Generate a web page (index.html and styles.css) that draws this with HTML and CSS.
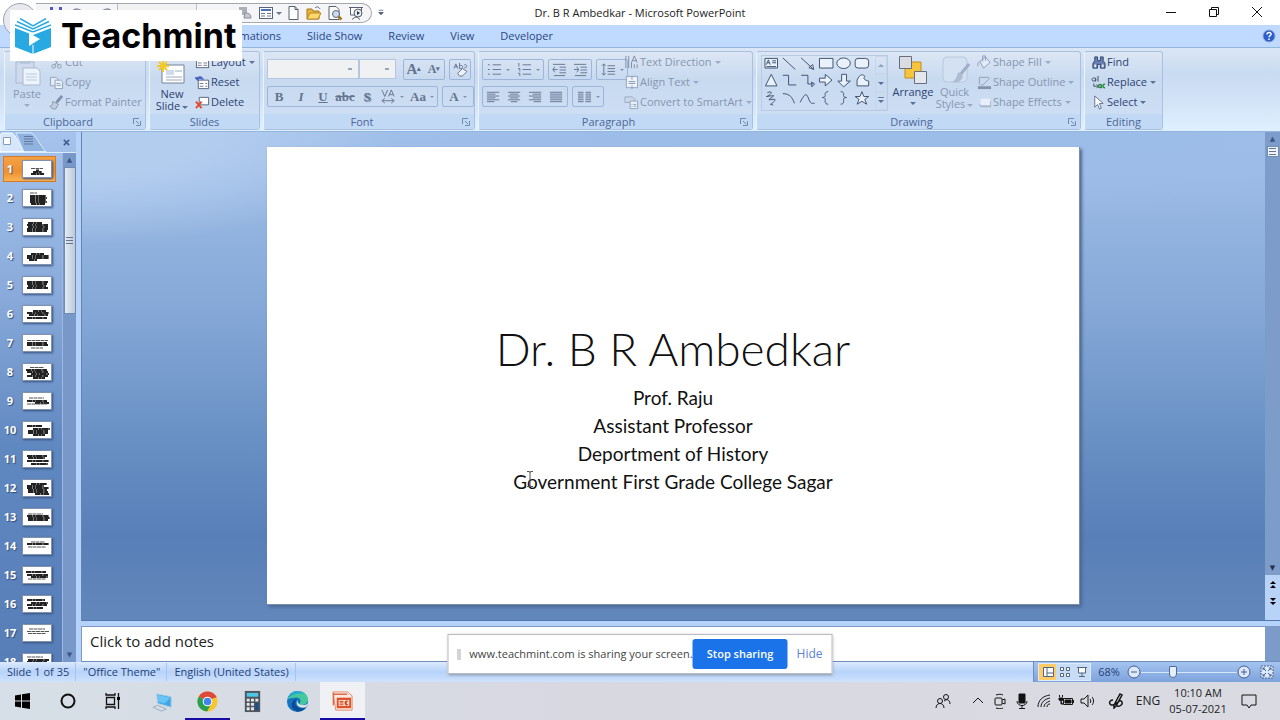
FILE: index.html
```html
<!DOCTYPE html>
<html lang="en">
<head>
<meta charset="utf-8">
<title>Dr. B R Ambedkar - Microsoft PowerPoint</title>
<link rel="stylesheet" href="styles.css">
</head>
<body>
<svg class="defs" aria-hidden="true">
  <symbol id="launch" viewBox="0 0 8 8"><path d="M.5 6V.5H6M3 3l3 3M7.500 3v4.500H3" fill="none" stroke="#7089ad"/></symbol>
  <symbol id="lines-l" viewBox="0 0 16 14"><path d="M1 2.500h13M1 4.500h9M1 6.500h13M1 8.500h9M1 10.500h13M1 12.500h8"/></symbol>
  <symbol id="lines-c" viewBox="0 0 16 14"><path d="M1 2.500h13M3 4.500h9M1 6.500h13M3 8.500h9M1 10.500h13M4 12.500h7"/></symbol>
  <symbol id="lines-r" viewBox="0 0 16 14"><path d="M1 2.500h13M5 4.500h9M1 6.500h13M5 8.500h9M1 10.500h13M6 12.500h8"/></symbol>
  <symbol id="lines-j" viewBox="0 0 16 14"><path d="M1 2.500h13M1 4.500h13M1 6.500h13M1 8.500h13M1 10.500h13M1 12.500h13"/></symbol>
  <symbol id="layout" viewBox="0 0 16 16"><rect x="1.500" y="2.500" width="13" height="11" fill="#fff" stroke="#56647c"/><path d="M3 5h10" stroke="#4870b8" stroke-width="2"/><path d="M3 8.500h4M3 11h4M9 8.500h4M9 11h4" stroke="#68768c"/></symbol>
</svg>
<div class="app">
  <header class="title-bar">
    <div class="quick">
      <svg class="office" viewBox="0 0 36 36" aria-hidden="true"><circle cx="18" cy="18" r="16.500" fill="#e7e9ee" stroke="#9ba3b0"/></svg>
      <svg class="quick-tools" viewBox="0 0 81 17" aria-hidden="true">
        <path d="M14 2h12v12H14z" fill="#5658b8"/><path d="M17 2h6v5h-6z" fill="#eef"/><path d="M36 8c2-5 9-5 11 1M76 8c-2-5-9-5-11 1" fill="none" stroke="#8c95a8" stroke-width="2"/>
      </svg>
      <span class="quick-field"></span>
      <button class="q" aria-label="Shape style"><svg viewBox="0 0 16 16"><path d="M2 2h8v8H2z" fill="#aab0b8"/><path d="M8 8c5 0 6 2 6 5H7z" fill="#c6cad0" stroke="#88909c"/></svg></button>
      <button class="q" aria-label="Slide layout"><svg viewBox="0 0 16 16"><use href="#layout"/></svg></button><i class="arrow"></i>
      <button class="q" aria-label="New"><svg viewBox="0 0 16 16"><path d="M4 1.500h6l3 3v10H4z" fill="#fff" stroke="#566070"/><path d="M10 1.500v3h3" fill="none" stroke="#566070"/></svg></button>
      <button class="q" aria-label="Open"><svg viewBox="0 0 16 16"><path d="M1 14V4h5l1 2h6v8z" fill="#e7b43a" stroke="#a9741c"/><path d="M1 14l3-6h11l-3 6z" fill="#ffd968" stroke="#b9862c"/><path d="M9 3c2-2 4-1 5 1" fill="none" stroke="#55647f"/></svg></button>
      <button class="q" aria-label="Print preview"><svg viewBox="0 0 16 16"><path d="M2 1.500h7l3 3v10H2z" fill="#fff" stroke="#566070"/><circle cx="9" cy="9" r="3.500" fill="#c9dcf0" stroke="#5b6674"/><path d="M11.500 11.500l3 3" stroke="#a8741f" stroke-width="2.500"/></svg></button>
      <button class="q" aria-label="Slide show"><svg viewBox="0 0 16 16"><path d="M1 2.500h14M2.500 3v7h11V3M8 10v3M4 14.500l4-3 4 3" fill="#fff" stroke="#566070"/><circle cx="10" cy="8" r="4" fill="#e5eaf1" stroke="#566070"/><path d="M9 6v4l3-2z" fill="#333"/></svg></button>
    </div>
    <button class="more" aria-label="Customize toolbar"><svg viewBox="0 0 8 8"><path d="M1 1h6M1 4h6L4 7z" stroke="#46566e" fill="#46566e"/></svg></button>
    <h1>Dr. B R Ambedkar - Microsoft PowerPoint</h1>
    <div class="window-buttons">
      <button aria-label="Minimize"><svg viewBox="0 0 12 12"><path d="M1 6.500h10"/></svg></button>
      <button aria-label="Restore"><svg viewBox="0 0 12 12"><path d="M1.500 3.500h7v7h-7zM3.500 3V1.500h7v7H9"/></svg></button>
      <button aria-label="Close"><svg viewBox="0 0 12 12"><path d="M1 1l10 10M11 1L1 11"/></svg></button>
    </div>
  </header>

  <nav class="tabs" aria-label="Ribbon tabs">
    <button>Animations</button><button>Slide Show</button><button>Review</button><button>View</button><button>Developer</button>
    <button class="help" aria-label="Help"><svg viewBox="0 0 14 14"><circle cx="7" cy="7" r="6" fill="#2c5fce" stroke="#8fa5cc"/><path d="M5 5.500c0-3 4.500-2.500 4 0C8.700 6.600 7 7 7 8.300M7 9.500v1.500" stroke="#fff" stroke-width="1.500" fill="none"/></svg></button>
  </nav>

  <section class="ribbon" aria-label="Ribbon">
    <section class="group clipboard off">
      <div class="body">
        <button class="big"><svg viewBox="0 0 30 30"><path d="M4 5h18v21H4z" fill="#cfdaec" stroke="#a9b9d2"/><path d="M8 2h10v5H8z" fill="#b9c7dc"/><path d="M11 11h14l3 3v14H11z" fill="#eef4fc" stroke="#a9b9d2"/><path d="M14 17h11M14 20h11M14 23h11" stroke="#bac9df"/></svg>Paste<i class="arrow"></i></button>
        <div class="rows">
          <button><svg viewBox="0 0 16 16"><path d="M4 2l6 9M12 2L6 11" stroke="#8f9cb0"/><circle cx="5" cy="12" r="2" fill="none" stroke="#8f9cb0"/><circle cx="11" cy="12" r="2" fill="none" stroke="#8f9cb0"/></svg>Cut</button>
          <button><svg viewBox="0 0 16 16"><path d="M1.500 2.500h6l2 2v7h-8z" fill="#e2ecf9" stroke="#91a1ba"/><path d="M6.500 5.500h6l2 2v7h-8z" fill="#eaf2fc" stroke="#91a1ba"/><path d="M8 9h4M8 11h5" stroke="#91a1ba"/></svg>Copy</button>
          <button><svg viewBox="0 0 16 16"><path d="M14 1L8 8" stroke="#8090aa" stroke-width="3"/><path d="M4 7l6 3-3 5c-3 0-5-1-6-3 2 0 3-2 3-5z" fill="#c3cede" stroke="#8796ad"/></svg>Format Painter</button>
        </div>
      </div>
      <h2>Clipboard</h2><button class="launch" aria-label="Clipboard options"><svg><use href="#launch"/></svg></button>
    </section>
    <section class="group slides">
      <div class="body">
        <button class="big"><svg viewBox="0 0 30 30"><path d="M5 8h22v18H5z" fill="#fff" stroke="#72829d"/><path d="M9 13h8v5H9z" fill="#d1dbeb"/><path d="M18 14h7M9 20h16M9 23h16" stroke="#9caabd"/><path d="M6 3v12M0 9h12M2 5l8 8M10 5l-8 8" stroke="#f1c928" stroke-width="2"/></svg>New<span>Slide<i class="arrow"></i></span></button>
        <div class="rows">
          <button><svg><use href="#layout"/></svg>Layout<i class="arrow"></i></button>
          <button><svg viewBox="0 0 16 16"><path d="M3.500 5.500h11v9h-11z" fill="#fff" stroke="#56647c"/><path d="M5 9h4M5 12h4M11 9h2M11 12h2" stroke="#68768c"/><path d="M9 5C8 1 4 1 3 4M0 3l3 3 2-4z" fill="#4868c8" stroke="#4868c8"/></svg>Reset</button>
          <button><svg viewBox="0 0 16 16"><path d="M4.500 2.500h10v8h-10z" fill="#fff" stroke="#56647c"/><path d="M1 7l6 7M7 7l-6 7" stroke="#e3492b" stroke-width="2"/></svg>Delete</button>
        </div>
      </div>
      <h2>Slides</h2>
    </section>
    <section class="group font off">
      <div class="body stack">
        <div class="line">
          <div class="combos"><select class="family" aria-label="Font"></select><select class="size" aria-label="Font size"></select></div>
          <div class="set"><button class="serif grow">A<sup>▴</sup></button><button class="serif shrink">A<sup>▾</sup></button></div>
          <div class="set"><button aria-label="Clear formatting"><svg viewBox="0 0 16 16"><path d="M1 7l2-5 2 5M2 5h3M7 7V1M7 4c4-2 5 4 0 3M12 3c4-1 3 4 0 3" fill="none"/><path d="M5 12l5-5 5 3-5 5H7z" fill="#edf3fc"/></svg></button></div>
        </div>
        <div class="line">
          <div class="set letters serif"><button><b>B</b></button><button><em>I</em></button><button><u>U</u></button><button><s>abc</s></button><button><b class="shadow">S</b></button><button class="spacing"><svg viewBox="0 0 16 16"><path d="M1 1l3 7 3-7M8 8l3-7 3 7M9 6h4M1 12.500h13M4 10l-3 2.500L4 15M11 10l3 2.500L11 15"/></svg><i class="arrow"></i></button><button class="case">Aa<i class="arrow"></i></button></div>
          <div class="set letters serif"><button class="case">A<i class="arrow"></i></button></div>
        </div>
      </div>
      <h2>Font</h2><button class="launch" aria-label="Font options"><svg><use href="#launch"/></svg></button>
    </section>
    <section class="group paragraph off">
      <div class="body">
        <div class="stack">
          <div class="line">
            <div class="set"><button class="wide" aria-label="Bullets"><svg viewBox="0 0 16 16"><path d="M1 3h2M1 8h2M1 13h2M6 3h9M6 8h9M6 13h9"/></svg><i class="arrow"></i></button><button class="wide" aria-label="Numbering"><svg viewBox="0 0 16 16"><path d="M2 1v4M1 7h2v3M1 12h2v3M6 3h9M6 8h9M6 13h9"/></svg><i class="arrow"></i></button></div>
            <div class="set"><button aria-label="Decrease indent"><svg viewBox="0 0 16 16"><path d="M1 2.500h13M8 5.500h7M8 8.500h7M8 11.500h7M2 14.500h12M6 8H1M3 5L1 8l2 3"/></svg></button><button aria-label="Increase indent"><svg viewBox="0 0 16 16"><path d="M1 2.500h13M8 5.500h7M8 8.500h7M8 11.500h7M2 14.500h12M1 8h5M4 5l2 3-2 3"/></svg></button></div>
            <div class="set"><button class="wide" aria-label="Line spacing"><svg viewBox="0 0 16 16"><path d="M3 2v12M1 4l2-2 2 2M1 12l2 2 2-2M7 4h8M7 7h8M7 10h8M7 13h8"/></svg><i class="arrow"></i></button></div>
          </div>
          <div class="line">
            <div class="set"><button aria-label="Align left"><svg><use href="#lines-l"/></svg></button><button aria-label="Center"><svg><use href="#lines-c"/></svg></button><button aria-label="Align right"><svg><use href="#lines-r"/></svg></button><button aria-label="Justify"><svg><use href="#lines-j"/></svg></button></div>
            <div class="set"><button class="wide" aria-label="Columns"><svg viewBox="0 0 16 14"><path d="M1 2.500h6M1 4.500h6M1 6.500h6M1 8.500h6M1 10.500h6M1 12.500h6M9 2.500h6M9 4.500h6M9 6.500h6M9 8.500h6M9 10.500h6M9 12.500h6"/></svg><i class="arrow"></i></button></div>
          </div>
        </div>
        <div class="rows">
          <button><svg viewBox="0 0 16 16"><path d="M2 1v13M5 1v13M8 8v6M11 10v4M14 10v4M8 8l3-7 3 7M9 6h4" fill="none" stroke="#7d8ba2"/></svg>Text Direction<i class="arrow"></i></button>
          <button><svg viewBox="0 0 16 16"><path d="M2.500 1.500h12v12h-12z" fill="#edf4fd" stroke="#91a1ba"/><path d="M5 7h7M5 9h7M8.500 1v4M8.500 15v-4" stroke="#8796ad"/></svg>Align Text<i class="arrow"></i></button>
          <button><svg viewBox="0 0 16 16"><path d="M1 2h8l3 3-3 3H1z" fill="#cbd7e8" stroke="#9aabc4"/><path d="M6.500 6.500h8v8h-8z" fill="#eef4fc" stroke="#91a1ba"/><path d="M8 10h1M10 10h3M8 12h1M10 12h3" stroke="#8796ad"/></svg>Convert to SmartArt<i class="arrow"></i></button>
        </div>
      </div>
      <h2>Paragraph</h2><button class="launch" aria-label="Paragraph options"><svg><use href="#launch"/></svg></button>
    </section>
    <section class="group drawing">
      <div class="body">
        <div class="gallery">
          <svg viewBox="0 0 114 56" role="img" aria-label="Shapes">
            <path d="M1.500 2.500h13v10h-13z"/><path d="M3 9l2-5 2 5M4 7h2M9 5h4M9 7h4M3 11h10M20 2l13 12M39 2l12 11M52 14l-5-2 4-3zM58 2.500h14v10H58zM2 31L8 19l6 12zM81 19h5v7h4l-7 6-6-6h4zM58 23h6v-4l7 6-7 6v-4h-6zM97 31v-6c3-7 6-6 8-4-2 3 0 4 4 5v5zM102 37l2 5 5 0-4 3 2 5-5-3-5 3 2-5-4-3 5 0z"/><path class="open-line" d="M20 20h6v10h8M39 20h7v9h5M50 27v5l3-3zM4 38c8-3 2 4-1 4 8-1 10-2 4 2s9-2 4 3-5 2-1 4M20 39c7 0 10 4 12 10M38 48c6-12 7-8 9-3s3 4 6 4M67 37c-4 0-3 3-3 4s-1 2-3 2c2 0 3 1 3 2s-1 5 3 5M80 37c4 0 3 3 3 4s1 2 3 2c-2 0-3 1-3 2s1 5-3 5"/><ellipse cx="83" cy="7.500" rx="7" ry="5.500"/><rect x="95" y="2.500" width="14" height="10" rx="3"/>
          </svg>
          <div class="gallery-scroll"><button aria-label="Previous shapes"><i class="arrow up"></i></button><button aria-label="Next shapes"><i class="arrow"></i></button><button aria-label="All shapes"><i class="arrow all"></i></button></div>
        </div>
        <button class="big arrange"><svg viewBox="0 0 30 30"><path d="M7 7h16v16H7z" fill="#f6c53b" stroke="#c28d22"/><path d="M1.500 1.500h12v12h-12z" fill="#d9dce2" stroke="#686f7a"/><path d="M16.500 16.500h12v12h-12z" fill="#e4e7eb" stroke="#686f7a"/></svg>Arrange<i class="arrow"></i></button>
        <button class="big styles"><svg viewBox="0 0 30 30"><rect x="3" y="2" width="24" height="25" rx="4" fill="#d4e1f3" stroke="#b8c8df"/><path d="M29 9L20 20" stroke="#9eafc8" stroke-width="3"/><path d="M19 17l4 4c-2 7-7 7-11 6 5-2 4-7 7-10z" fill="#aebdd2"/></svg>Quick<span>Styles<i class="arrow"></i></span></button>
        <div class="rows off">
          <button><svg viewBox="0 0 16 16"><path d="M3 7l6-5 5 6-7 6zM6 7V1h3v5" fill="#e2ebf7" stroke="#8d9db6"/><path d="M3 7c-3 1-2 4-2 5" fill="none" stroke="#8d9db6"/></svg>Shape Fill<i class="arrow"></i></button>
          <button><svg viewBox="0 0 16 16"><path d="M2.500 10V2.500h10M14 3L7 10l-3 1" fill="none" stroke="#8d9db6"/><path d="M1 13.500h14" stroke="#8593aa" stroke-width="3"/></svg>Shape Outline<i class="arrow"></i></button>
          <button><svg viewBox="0 0 16 16"><path d="M2 10h11l2-5v8H4z" fill="#a6b5ca"/><path d="M4 4h10v7H4z" fill="#e7effa"/></svg>Shape Effects<i class="arrow"></i></button>
        </div>
      </div>
      <h2>Drawing</h2><button class="launch" aria-label="Drawing options"><svg><use href="#launch"/></svg></button>
    </section>
    <section class="group editing">
      <div class="body"><div class="rows">
        <button><svg viewBox="0 0 16 16"><path d="M4 2h3v4h3V2h3v4l2 3v5h-5v-4H7v4H2V9l2-3z" fill="#687fb0" stroke="#304470"/><path d="M3.500 10h2v3h-2zM11.500 10h2v3h-2z" fill="#e5eefb"/></svg>Find</button>
        <button><svg viewBox="0 0 16 16"><path d="M5 3v4M5 5c0-3-4-2-4 0s4 2 4 0M7.500 1v6M3 9v3h4M6 10l2 2-2 2" fill="none" stroke="#404a60"/><path d="M11 10v4M11 12c0-3-3-2-3 0s3 2 3 0M15 10c-3-1-3 4 0 3.500" fill="none" stroke="#26883a" stroke-width="1.500"/></svg>Replace<i class="arrow"></i></button>
        <button><svg viewBox="0 0 16 16"><path d="M4 1v12l3-3 2 5 2-1-2-5h4z" fill="#fff" stroke="#63718a"/></svg>Select<i class="arrow"></i></button>
      </div></div>
      <h2>Editing</h2>
    </section>
  </section>

  <main class="workspace">
    <aside class="outline">
      <div class="pane-tabs">
        <svg viewBox="0 0 50 20" aria-hidden="true"><path d="M0 19.500V3l2-2h10c4 2 8 13 12 18.500z" fill="#d7e7fb" stroke="#f5faff"/><path d="M16 1h15c5 2 9 13 15 18.500H24C21 14 18 5 16 1z" fill="#90b2df" stroke="#dcecff"/><path d="M3.500 5.500h7v7h-7z" fill="#fff" stroke="#879bbb"/><path d="M24 4.500h9M24 7h9M24 9.500h9M24 12h9" stroke="#65799b"/></svg>
        <button aria-label="Close pane"><svg class="x" viewBox="0 0 8 8"><path d="M1 1l6 6M7 1L1 7" stroke="#446095" stroke-width="2"/></svg></button>
      </div>
      <div class="pane-body">
        <ol class="thumbs">
          <li><button class="thumb current">1<svg><path class="faint" d="M8 7.500h12"/><path class="ink" d="M13 9.500h3M10 11h9M8 13h13"/></svg></button></li>
          <li><button class="thumb">2<svg><path class="faint" d="M7 3h7"/><path class="ink" d="M7 6h16M7 8h17M7 10h16M7 12h17M8 14h14"/></svg></button></li>
          <li><button class="thumb">3<svg><path class="ink" d="M5 4h14M4 6h21M5 8h20M4 10h21M4 12h20"/></svg></button></li>
          <li><button class="thumb">4<svg><path class="ink" d="M8 6h13M4 8h22M4 10h22M6 12h8"/></svg></button></li>
          <li><button class="thumb">5<svg><path class="ink" d="M4 5h21M4 7h20M5 9h18M4 11h21"/></svg></button></li>
          <li><button class="thumb">6<svg><path class="ink" d="M10 5h13M4 7h22M6 9h19M4 12h20"/></svg></button></li>
          <li><button class="thumb">7<svg><path class="ink" d="M4 8h20M4 10h21"/><path class="faint" d="M4 5.500h21M8 13h12"/></svg></button></li>
          <li><button class="thumb">8<svg><path class="ink" d="M3 6h21M4 8h21M8 10h18M4 12h21M10 14h12"/><path class="faint" d="M7 3.500h14"/></svg></button></li>
          <li><button class="thumb">9<svg><path class="ink" d="M4 8h20M12 10h14"/><path class="faint" d="M6 5h15M4 11h20"/></svg></button></li>
          <li><button class="thumb">10<svg><path class="ink" d="M4 4h15M10 7h17M5 9h20M5 11h20M10 13h12"/></svg></button></li>
          <li><button class="thumb">11<svg><path class="ink" d="M4 5h20M5 7h17M4 10h22M8 13h17"/></svg></button></li>
          <li><button class="thumb">12<svg><path class="ink" d="M8 4h16M4 6h17M4 8h22M5 10h19M5 12h20M12 14h14"/></svg></button></li>
          <li><button class="thumb">13<svg><path class="faint" d="M5 5h15"/><path class="ink" d="M4 7h22M5 9h22M5 11h20"/></svg></button></li>
          <li><button class="thumb">14<svg><path class="ink" d="M4 6h22"/><path class="faint" d="M8 4h14M5 9h18"/></svg></button></li>
          <li><button class="thumb">15<svg><path class="ink" d="M3 5h20M4 8h21M8 10h17"/><path class="faint" d="M5 12h18"/></svg></button></li>
          <li><button class="thumb">16<svg><path class="ink" d="M4 4h18M8 7h17M4 9h20M5 12h15"/></svg></button></li>
          <li><button class="thumb">17<svg><path class="faint" d="M6 4h16M4 6.500h22M5 8.500h18"/></svg></button></li>
          <li><button class="thumb">18<svg><path class="faint" d="M4 3h16"/><path class="ink" d="M5 6h21M4 8h20"/></svg></button></li>
        </ol>
        <div class="scroll left"><span>▲</span><div class="grip"><b></b></div><span class="down">▼</span></div>
      </div>
    </aside>
    <div class="editor">
      <div class="stage-row">
        <div class="stage">
          <article class="slide">
            <h2>Dr. B R Ambedkar</h2>
            <p>Prof. Raju</p><p>Assistant Professor</p><p>Deportment of History</p>
            <p class="college">Government First Grade College Sagar<svg class="caret" viewBox="0 0 8 16" aria-hidden="true"><path d="M1 .5h2.500l.5 1 .5-1H7M4 1v14M1 15.500h2.500l.5-1 .5 1H7" fill="none" stroke="#555"/></svg></p>
          </article>
        </div>
        <div class="scroll right"><span>▲</span><div class="grip"><b></b></div><span class="down">▼</span><div class="jump"><svg viewBox="0 0 8 26" aria-hidden="true"><path d="M1 4l3-3 3 3zM1 8l3-3 3 3zM1 18l3 3 3-3zM1 22l3 3 3-3z"/></svg></div></div>
      </div>
      <div class="notes-row"><textarea aria-label="Notes" placeholder="Click to add notes"></textarea><div class="notes-scroll"></div></div>
    </div>
  </main>

  <footer class="status">
    <span>Slide 1 of 35</span><span>"Office Theme"</span><span>English (United States)</span>
    <div class="zoom">
      <div class="views">
        <button class="on" aria-label="Normal"><svg viewBox="0 0 12 12"><path d="M1.500 1.500h10v9h-10zM5 2v8M5 7h6" fill="#fff"/></svg></button>
        <button aria-label="Slide sorter"><svg viewBox="0 0 12 12"><path d="M1.500 1.500h3v3h-3zM7.500 1.500h3v3h-3zM1.500 7.500h3v3h-3zM7.500 7.500h3v3h-3z" fill="#fff"/></svg></button>
        <button aria-label="Slide show"><svg viewBox="0 0 12 12"><path d="M1 1.500h10M2.500 2v5h7V2M6 7v3M3 10.500h6" fill="#fff"/></svg></button>
      </div>
      <button class="percent">68%</button>
      <button class="round" aria-label="Zoom out"><svg viewBox="0 0 14 14"><circle cx="7" cy="7" r="6"/><path d="M4 7h6"/></svg></button>
      <input type="range" aria-label="Zoom" min="0" max="100" value="32">
      <button class="round" aria-label="Zoom in"><svg viewBox="0 0 14 14"><circle cx="7" cy="7" r="6"/><path d="M4 7h6M7 4v6"/></svg></button>
      <button class="round fit" aria-label="Fit to window"><svg viewBox="0 0 14 14"><path d="M1 1h12v12H1z" stroke-dasharray="2 1"/><path d="M3 3l3 3M3 5V3h2M11 3L8 6M9 3h2v2M3 11l3-3M3 9v2h2M11 11L8 8M11 9v2H9"/></svg></button>
    </div>
  </footer>

  <footer class="taskbar">
    <button aria-label="Start"><svg viewBox="0 0 20 20"><path d="M2 4.500l6-1v6H2zM9 3.300L17 2v7.500H9zM2 10.500h6v6l-6-1zM9 10.500h8V18l-8-1.300z"/></svg></button>
    <button aria-label="Search"><svg viewBox="0 0 20 20"><circle cx="10" cy="10" r="6.500" fill="none" stroke="#111" stroke-width="2"/></svg></button>
    <button aria-label="Task view"><svg viewBox="0 0 20 20"><path d="M3 2v2h9V2M3.500 6.500h8v7h-8zM3 18v-2h9v2M15.500 2v16" fill="none" stroke="#111" stroke-width="1.300"/><path d="M14 6h3v3h-3z"/></svg></button>
    <div class="apps">
      <button aria-label="This PC"><svg viewBox="0 0 24 24"><path d="M6 4l15 3v11L7 14z" fill="#3ea7e8" stroke="#b2cce0"/><path d="M7 5l13 3-6 6-7-2z" fill="#69c4f5"/><path d="M2 18l5-2 9 4-5 2z" fill="#d4dee7" stroke="#9aabb9"/></svg></button>
      <button class="open" aria-label="Chrome"><svg viewBox="0 0 24 24"><circle cx="12" cy="12" r="10.500" fill="#f7c52d"/><path d="M12 12L2.900 6.700A10.500 10.500 0 0 1 21.100 6.700z" fill="#df4937"/><path d="M12 12L2.900 6.700A10.500 10.500 0 0 0 11.500 22.500L16 14z" fill="#28a052"/><path d="M12 7h9.200" stroke="#df4937" stroke-width="2"/><circle cx="12" cy="12" r="5" fill="#fff"/><circle cx="12" cy="12" r="4" fill="#4284ee"/></svg></button>
      <button aria-label="Calculator"><svg viewBox="0 0 24 24"><path d="M4 1h16v22H4z" fill="#50565e"/><path d="M6 3h12v4H6z" fill="#4dc7e8"/><path d="M6 9h3v3H6zM10.500 9h3v3h-3zM15 9h3v3h-3zM6 13.500h3v3H6zM10.500 13.500h3v3h-3zM6 18h3v3H6zM10.500 18h3v3h-3z" fill="#e6e9ec"/><path d="M15 13.500h3V21h-3z" fill="#164f94"/></svg></button>
      <button aria-label="Edge"><svg viewBox="0 0 24 24"><circle cx="12" cy="12" r="11" fill="#1673c2"/><path d="M1.500 10C4-3 23-1 23 10c0 6-8 7-9 4 3-3 0-7-5-6-4 0-6 1-7.500 2z" fill="#45c99a"/><path d="M1.500 10C4 0 14-1 19 4 12 3 5 5 1.500 10z" fill="#27a9d8"/><path d="M12 9c-5 4-1 11 6 10 2 0 3-1 4-2-3 5-9 7-13 4C4 18 5 10 12 9z" fill="#0a4d96"/><path d="M12 10c-1 4 3 7 9 5l2-1-2 4c-7 2-12-2-9-8z" fill="#dde1e7"/></svg></button>
      <button class="open active" aria-label="PowerPoint"><svg viewBox="0 0 24 24"><path d="M2 2h15l5 4v15H5z" fill="#fbe9e2" stroke="#e08a6c"/><path d="M2.500 3v13M3 4.500h14" stroke="#dd6a45" stroke-width="1.500"/><path d="M6 8h15v11H6z" fill="#e0532a"/><path d="M8 10.500h11v6H8z" fill="#fbe3da"/><path d="M9 11.500h4v1.500H9zM9 14h4v1.500H9z" fill="#d4471f"/><path d="M18 11.500a2.500 2.500 0 1 0 0 4l-2-2z" fill="#d4471f"/></svg></button>
    </div>
    <div class="tray">
      <button class="people" aria-label="People"><svg viewBox="0 0 16 16"><circle cx="11" cy="4" r="2.500"/><circle cx="5" cy="8" r="2.500"/><path d="M1 15c0-6 8-6 8 0M9 8c4-3 6 0 6 3"/></svg></button>
      <button aria-label="Show hidden icons"><svg viewBox="0 0 16 16"><path d="M3 10l5-5 5 5"/></svg></button>
      <button aria-label="Meet now"><svg viewBox="0 0 16 16"><rect x="3" y="5" width="7" height="7" rx="1"/><path d="M10 7l3-1v5l-3-1M4 2c3-1 5-1 7 0M4 15c3 1 5 1 7 0"/></svg></button>
      <button aria-label="Microphone"><svg viewBox="0 0 16 16"><path d="M5 1h6v9H5z" fill="#111"/><path d="M3 8c0 6 10 6 10 0M8 12v3M5 15.500h6"/></svg></button>
      <button aria-label="Network"><svg viewBox="0 0 16 16"><path d="M2 14C2 7 7 3 14 2M5 14c0-5 4-8 9-9M8 14c0-3 3-5 6-6M11 14c0-2 1-3 3-3"/></svg></button>
      <button aria-label="Battery"><svg viewBox="0 0 16 16"><path d="M5.500 5.500h9v6h-9z"/><path d="M7 7h6v3H7z" fill="#111"/><path d="M15.500 7v3M1.500 2v2M4.500 2v2M1 5h4v2L3 8 1 7zM3 8v3h2" fill="#111"/></svg></button>
      <button aria-label="Volume"><svg viewBox="0 0 16 16"><path d="M1 6h3l4-4v12l-4-4H1zM10 6c1 1 1 3 0 4M12 4c2 2 2 6 0 8"/></svg></button>
      <button class="pen" aria-label="Pen"><svg viewBox="0 0 16 16"><path d="M6 12L12 1l2 1-6 11-2 2zM5 7c-5 0-4 6 0 5 5-1 7-7 9-3 1 3-3 5-5 4" stroke-width="1.500"/></svg></button>
      <button class="language">ENG</button>
      <button class="clock"><time>10:10 AM</time><time>05-07-2021</time></button>
      <button class="notify" aria-label="Notifications"><svg viewBox="0 0 16 16"><path d="M1 2h14v10h-5l-2 3-2-3H1z"/></svg></button>
    </div>
  </footer>

  <div class="brand">
    <svg viewBox="0 0 36 36" aria-hidden="true"><path d="M0 10l18 7 18-7v19l-18 7-18-7z" fill="#29a9e1"/><path d="M0 7l18 7 18-7M2 3.500L18 11l16-7.500M5 .5L18 8 31 .5" fill="none" stroke="#29a9e1" stroke-width="1.500"/><path d="M18 14v3M18 27v9" stroke="#fff"/><path d="M14 15v13l11-7z" fill="#fff"/></svg>
    <strong>Teachmint</strong>
  </div>
  <div class="share" role="status">
    <b class="handle"></b><span>www.teachmint.com is sharing your screen.</span><button class="stop">Stop sharing</button><a href="#hide">Hide</a>
  </div>
</div>
</body>
</html>
```
FILE: styles.css
```css
* { box-sizing: border-box; }
body { margin: 0; font: 11px/14px "Open Sans", "Noto Sans", sans-serif; color: #2c4272; }
button { border: 0; padding: 0; margin: 0; background: none; font: inherit; color: inherit; display: flex; align-items: center; justify-content: center; }
h1, h2, p, ol { margin: 0; padding: 0; font-weight: 400; }
.defs { position: absolute; width: 0; height: 0; }
.app { position: relative; height: 100vh; min-height: 480px; display: flex; flex-direction: column; overflow: hidden; background: #c0daff; }
.arrow { display: inline-block; border: 3px solid transparent; border-top-color: currentColor; border-bottom: 0; opacity: .7; margin-left: 3px; vertical-align: middle; }

.title-bar { flex: 0 0 25px; background: #fff; display: flex; align-items: flex-start; position: relative; }
.quick { display: flex; align-items: center; height: 20px; margin: 3px 0 0 36px; width: 336px; border: 1px solid #a3a8b0; border-left: 0; border-radius: 0 10px 10px 0; background: #f5f5f7; }
.office { position: absolute; left: 2px; top: 2px; width: 36px; height: 36px; }
.quick-tools { width: 81px; height: 17px; flex: none; }
.quick-field { width: 80px; height: 18px; border: 1px solid #b9bdc5; border-width: 0 1px; background: #f2f2f2; margin-right: 37px; flex: none; }
.q { width: 21px; flex: none; }
.q svg { width: 16px; height: 16px; }
.quick .arrow { margin: 0; flex: none; }
.more { width: 18px; height: 24px; }
.more svg { width: 6px; height: 7px; }
.title-bar h1 { position: absolute; left: 0; right: 0; text-align: center; font-size: 11px; line-height: 25px; color: #222; pointer-events: none; }
.window-buttons { margin-left: auto; display: flex; padding-right: 2px; }
.window-buttons button { width: 43px; height: 24px; }
.window-buttons svg { width: 12px; height: 12px; fill: none; stroke: #111; }

.tabs { flex: 0 0 22px; display: flex; gap: 26px; padding: 0 4px 0 223px; background: #c0daff; font-size: 11px; color: #2b477f; }
.help { margin-left: auto; }
.help svg { width: 14px; height: 14px; }

.ribbon { flex: 0 0 85px; min-height: 0; display: flex; gap: 3px; padding: 3px 4px 1px; border: 1px solid #93b4df; border-width: 1px 0; background: linear-gradient(#dbe7f6, #c9dbf1 30%, #d1e2f7 60%, #dff0ff); }
.group { position: relative; display: flex; flex-direction: column; flex: none; border: 1px solid #a9c0df; border-left-color: #eaf3ff; border-radius: 3px; background: linear-gradient(#dce6f4, #c8daf0 35%, #cfe0f5); }
.clipboard { width: 142px; } .slides { width: 111px; } .font { width: 212px; } .paragraph { width: 275px; } .drawing { width: 325px; } .editing { width: 79px; }
.group > h2 { font-size: 11px; line-height: 15px; height: 15px; text-align: center; color: #4b6797; background: #c2d9f5; padding-right: 14px; }
.editing > h2, .slides > h2 { padding-right: 0; }
.launch { position: absolute; right: 4px; bottom: 3px; width: 8px; height: 8px; }
.launch svg { width: 8px; height: 8px; }
.body { flex: 1; min-height: 0; display: flex; }
.rows { display: grid; grid-template-rows: repeat(3, 20px); }
.rows button { justify-content: flex-start; white-space: nowrap; gap: 1px; }
.rows svg { width: 15px; height: 15px; flex: none; }
.rows .arrow { margin-left: 2px; }
.off, .styles { color: #8696b0; }
.big { flex-direction: column; justify-content: flex-start; line-height: 12px; white-space: nowrap; }
.big svg { width: 30px; height: 30px; margin-bottom: 1px; }
.big > .arrow { margin: 4px 0 0; }
.big span .arrow { margin-left: 2px; }
.clipboard .big { width: 44px; padding-top: 5px; }
.slides .big { width: 44px; padding-top: 5px; }
.slides .rows { margin-left: 1px; }

.stack { display: flex; flex-direction: column; gap: 6px; padding: 7px 3px 0; }
.font .stack { flex: 1; }
.line { display: flex; gap: 4px; height: 21px; }
.set { display: flex; border: 1px solid #9db5d8; border-radius: 2px; }
.set button { width: 20px; color: #64748f; }
.set svg { width: 15px; height: 15px; fill: none; stroke: #64748f; flex: none; }
.set button.wide { width: 30px; }
.set .arrow { margin-left: 4px; border-width: 2px; border-bottom: 0; flex: none; }
.combos { display: flex; margin-right: auto; }
.combos select { appearance: none; height: 20px; border: 1px solid #b5c7e0; border-radius: 0; background: #f0f1f3 linear-gradient(#9ba5b5, #9ba5b5) right 6px center / 4px 2px no-repeat; }
.family { width: 92px; } .size { width: 37px; }
.serif { font: 15px/19px "Liberation Serif", serif; }
.set .serif { font-weight: 700; }
.set .shrink { font-size: 12px; }
.serif sup { font-size: 7px; }
.letters { font-size: 13px; font-weight: 700; }
.font .letters button { width: 22px; }
.font .letters .case { width: 30px; }
.font .letters .spacing { width: 29px; }
.shadow { text-shadow: 1px 1px 1px #64748f; }
.paragraph .stack { width: 145px; padding-right: 0; }
.paragraph .set button { width: 21px; }
.paragraph .set button.wide { width: 30px; }

.gallery { display: flex; width: 127px; height: 56px; margin: 3px 3px 0 4px; border: 1px solid #b9cbe4; flex: none; }
.gallery > svg { flex: 1; min-width: 0; height: 54px; fill: #e8f1fc; stroke: #3e506f; }
.gallery .open-line { fill: none; }
.gallery-scroll { width: 12px; display: grid; grid-template-rows: repeat(3, 1fr); }
.gallery-scroll button { border: 1px solid #c7d6ea; }
.gallery-scroll .arrow { margin: 0; }
.gallery-scroll .up { transform: rotate(180deg); opacity: .4; }
.gallery-scroll .all { box-shadow: 0 -2px #d1e2f7, 0 -3px #3e506f; }
.arrange { width: 44px; padding-top: 3px; } .styles { width: 39px; padding-top: 3px; }
.drawing .rows { margin-left: 3px; }
.editing .rows { margin-left: 6px; }

.workspace { flex: 1; min-height: 0; display: flex; background: #b5d2fa; }
.outline { width: 76px; display: flex; flex-direction: column; background: linear-gradient(#a5c3ec, #8aabdb 30%, #5f87c0 60%, #587eb8); }
.pane-tabs { flex: 0 0 21px; display: flex; align-items: flex-end; border-bottom: 1px solid #dcebff; }
.pane-tabs svg { width: 50px; height: 20px; }
.pane-tabs button { flex: 1; height: 20px; padding-left: 6px; }
.pane-tabs .x { width: 7px; height: 7px; }
.pane-body { flex: 1; min-height: 0; display: flex; }
.thumbs { flex: 1; overflow: hidden; list-style: none; padding: 3px 0 0 3px; }
.thumbs li { height: 29px; }
.thumb { width: 53px; height: 26px; display: grid; grid-template-columns: 14px 30px; column-gap: 5px; justify-content: start; justify-items: center; color: #fff; font: 700 11px/14px "Noto Sans", sans-serif; text-shadow: 1px 1px 1px #304f7d; }
.thumb svg { width: 30px; height: 18px; background: #fff; border: 1px solid #8192ae; box-shadow: 1px 1px 2px #36527e; }
.current { background: linear-gradient(#f4a348, #ed9030 60%, #f9b75a); box-shadow: inset 0 0 0 1px #d87820; }
.ink { stroke: #222; stroke-width: 2; stroke-dasharray: 5 .4 3 .3 7 .5; }
.faint { stroke: #555; stroke-width: 1; stroke-dasharray: 4 .5; }
.scroll { display: flex; flex-direction: column; align-items: center; background: #7898c9; color: #3d5684; font: 7px/14px "DejaVu Sans", sans-serif; }
.scroll.left { width: 14px; border-left: 1px solid #9db9e2; }
.grip { width: 12px; height: 147px; border: 1px solid #748bb0; background: linear-gradient(90deg, #e5ebf2, #bccada); display: flex; align-items: center; justify-content: center; }
.grip b { width: 7px; height: 7px; background: repeating-linear-gradient(#637590 0 1px, transparent 1px 3px); }
.scroll .down { margin-top: auto; }
.editor { flex: 1; min-width: 0; margin-left: 5px; display: flex; flex-direction: column; }
.stage-row { flex: 1; min-height: 0; display: flex; border-left: 1px solid #6484b5; border-bottom: 1px solid #5177ae; }
.stage { flex: 1; display: flex; align-items: center; justify-content: center; background: radial-gradient(ellipse 420px 150px at 0 0, #b3cdef 0 30%, #a9c5ea00 75%), radial-gradient(ellipse 900px 90px at 70% 0, #9dbde9 30%, #8caedb00), linear-gradient(#a3c1e9, #86a9d8 35%, #6c93c6 60%, #587fb8 83%, #6287bb); }
.slide { position: relative; width: 69%; max-width: 813px; aspect-ratio: 16 / 9; padding-top: 174px; text-align: center; background: #fff; border: 1px solid #7c8da9; border-width: 0 1px 1px 0; box-shadow: 2px 2px 3px #4b6791; color: #111; font: 19px/28px Lato, "Open Sans", sans-serif; }
.slide h2 { font-size: 46px; line-height: 56px; font-weight: 300; margin-bottom: 7px; }
.college { position: relative; width: max-content; margin: 0 auto; }
.caret { position: absolute; left: 13px; top: 3px; width: 8px; height: 16px; }
.scroll.right { width: 15px; background: #7e9cc9; }
.right .grip { height: 11px; background: #eef3fa; }
.right .down { color: #1f3050; }
.jump { width: 15px; height: 45px; background: #b9d3f8; display: flex; justify-content: center; padding-top: 5px; }
.jump svg { width: 8px; height: 26px; }
.notes-row { flex: 0 0 41px; min-height: 0; display: flex; padding-top: 5px; border-bottom: 1px solid #718fbd; }
.notes-row textarea { flex: 1; min-width: 0; height: 35px; resize: none; border: 1px solid #7e9ac4; border-width: 1px 0 0 1px; background: #fff; padding: 3px 8px; font: 15px/22px "Open Sans", sans-serif; color: #111; outline: 0; }
.notes-row textarea::placeholder { color: #222; }
.notes-scroll { width: 15px; background: #7c9bc9; }

.status { flex: 0 0 20px; display: flex; align-items: center; background: linear-gradient(#dceaff, #b7d3fa 50%, #cfe2fc); padding-left: 7px; color: #254078; }
.status > span { padding-right: 6px; margin-right: 7px; border-right: 1px solid #a9c3ea; line-height: 18px; }
.zoom { margin-left: auto; align-self: stretch; display: flex; align-items: center; border-left: 1px solid #6e8dbd; padding: 0 6px 0 4px; background: linear-gradient(#a5c4f0, #7da3dc); }
.views { display: flex; border: 1px solid #dceaff; background: #c9dcf5; }
.views button { width: 17px; height: 16px; }
.views .on { background: #ffcb66; }
.views svg { width: 12px; height: 12px; stroke: #526580; }
.percent { width: 36px; }
.round svg { width: 14px; height: 14px; fill: #dce8f8; stroke: #445f91; display: block; }
.zoom input { appearance: none; width: 96px; height: 14px; margin: 0; background: linear-gradient(#d8e6fa, #d8e6fa) center / 100% 1px no-repeat; }
.zoom input::-webkit-slider-thumb { appearance: none; width: 8px; height: 12px; background: #e6eef9; border: 1px solid #4f6b99; border-radius: 1px 1px 4px 4px; }
.fit { margin-left: 9px; }

.taskbar { flex: 0 0 38px; display: flex; background: linear-gradient(90deg, #d6dfe7, #d8d8e1 45%, #dadbe2); color: #222; }
.taskbar > button, .apps button { width: 45px; }
.taskbar > button svg { width: 20px; height: 20px; }
.apps { display: flex; margin-left: 5px; }
.apps svg { width: 23px; height: 23px; }
.apps .open { box-shadow: inset 0 -2px #1a0aa5; }
.apps .active { background: #f0f1f4; }
.tray { margin-left: auto; display: flex; padding-right: 9px; font-size: 12px; }
.tray button { width: 22px; }
.tray svg { width: 16px; height: 16px; fill: none; stroke: #151515; }
.tray .people { margin-right: 13px; }
.tray .pen { margin-left: 6px; }
.tray .language { width: 42px; }
.tray .clock { width: 58px; flex-direction: column; line-height: 16px; font-size: 11px; }
.tray .notify { width: 44px; }

.brand { position: absolute; left: 10px; top: 10px; width: 232px; height: 51px; padding-left: 5px; background: #fff; display: flex; align-items: center; gap: 10px; color: #000; }
.brand svg { width: 36px; height: 36px; }
.brand strong { font: 700 34px/46px Inter, sans-serif; }
.share { position: absolute; left: 50%; bottom: 46px; width: 385px; height: 40px; transform: translateX(-50%); display: flex; align-items: center; padding: 0 9px; background: #fff; border: 1px solid #b7bcc7; box-shadow: 0 1px 3px #6669; color: #444; font-size: 11px; white-space: nowrap; }
.handle { width: 5px; height: 11px; border: 1px solid #aaa; border-width: 0 1px; margin-right: 9px; }
.share span { flex: 1; }
.stop { width: 95px; height: 30px; flex: none; border-radius: 3px; background: #1a73e8; color: #fff; font-weight: 600; margin-right: 9px; }
.share a { color: #5b83d4; text-decoration: none; font-size: 12px; }
```
